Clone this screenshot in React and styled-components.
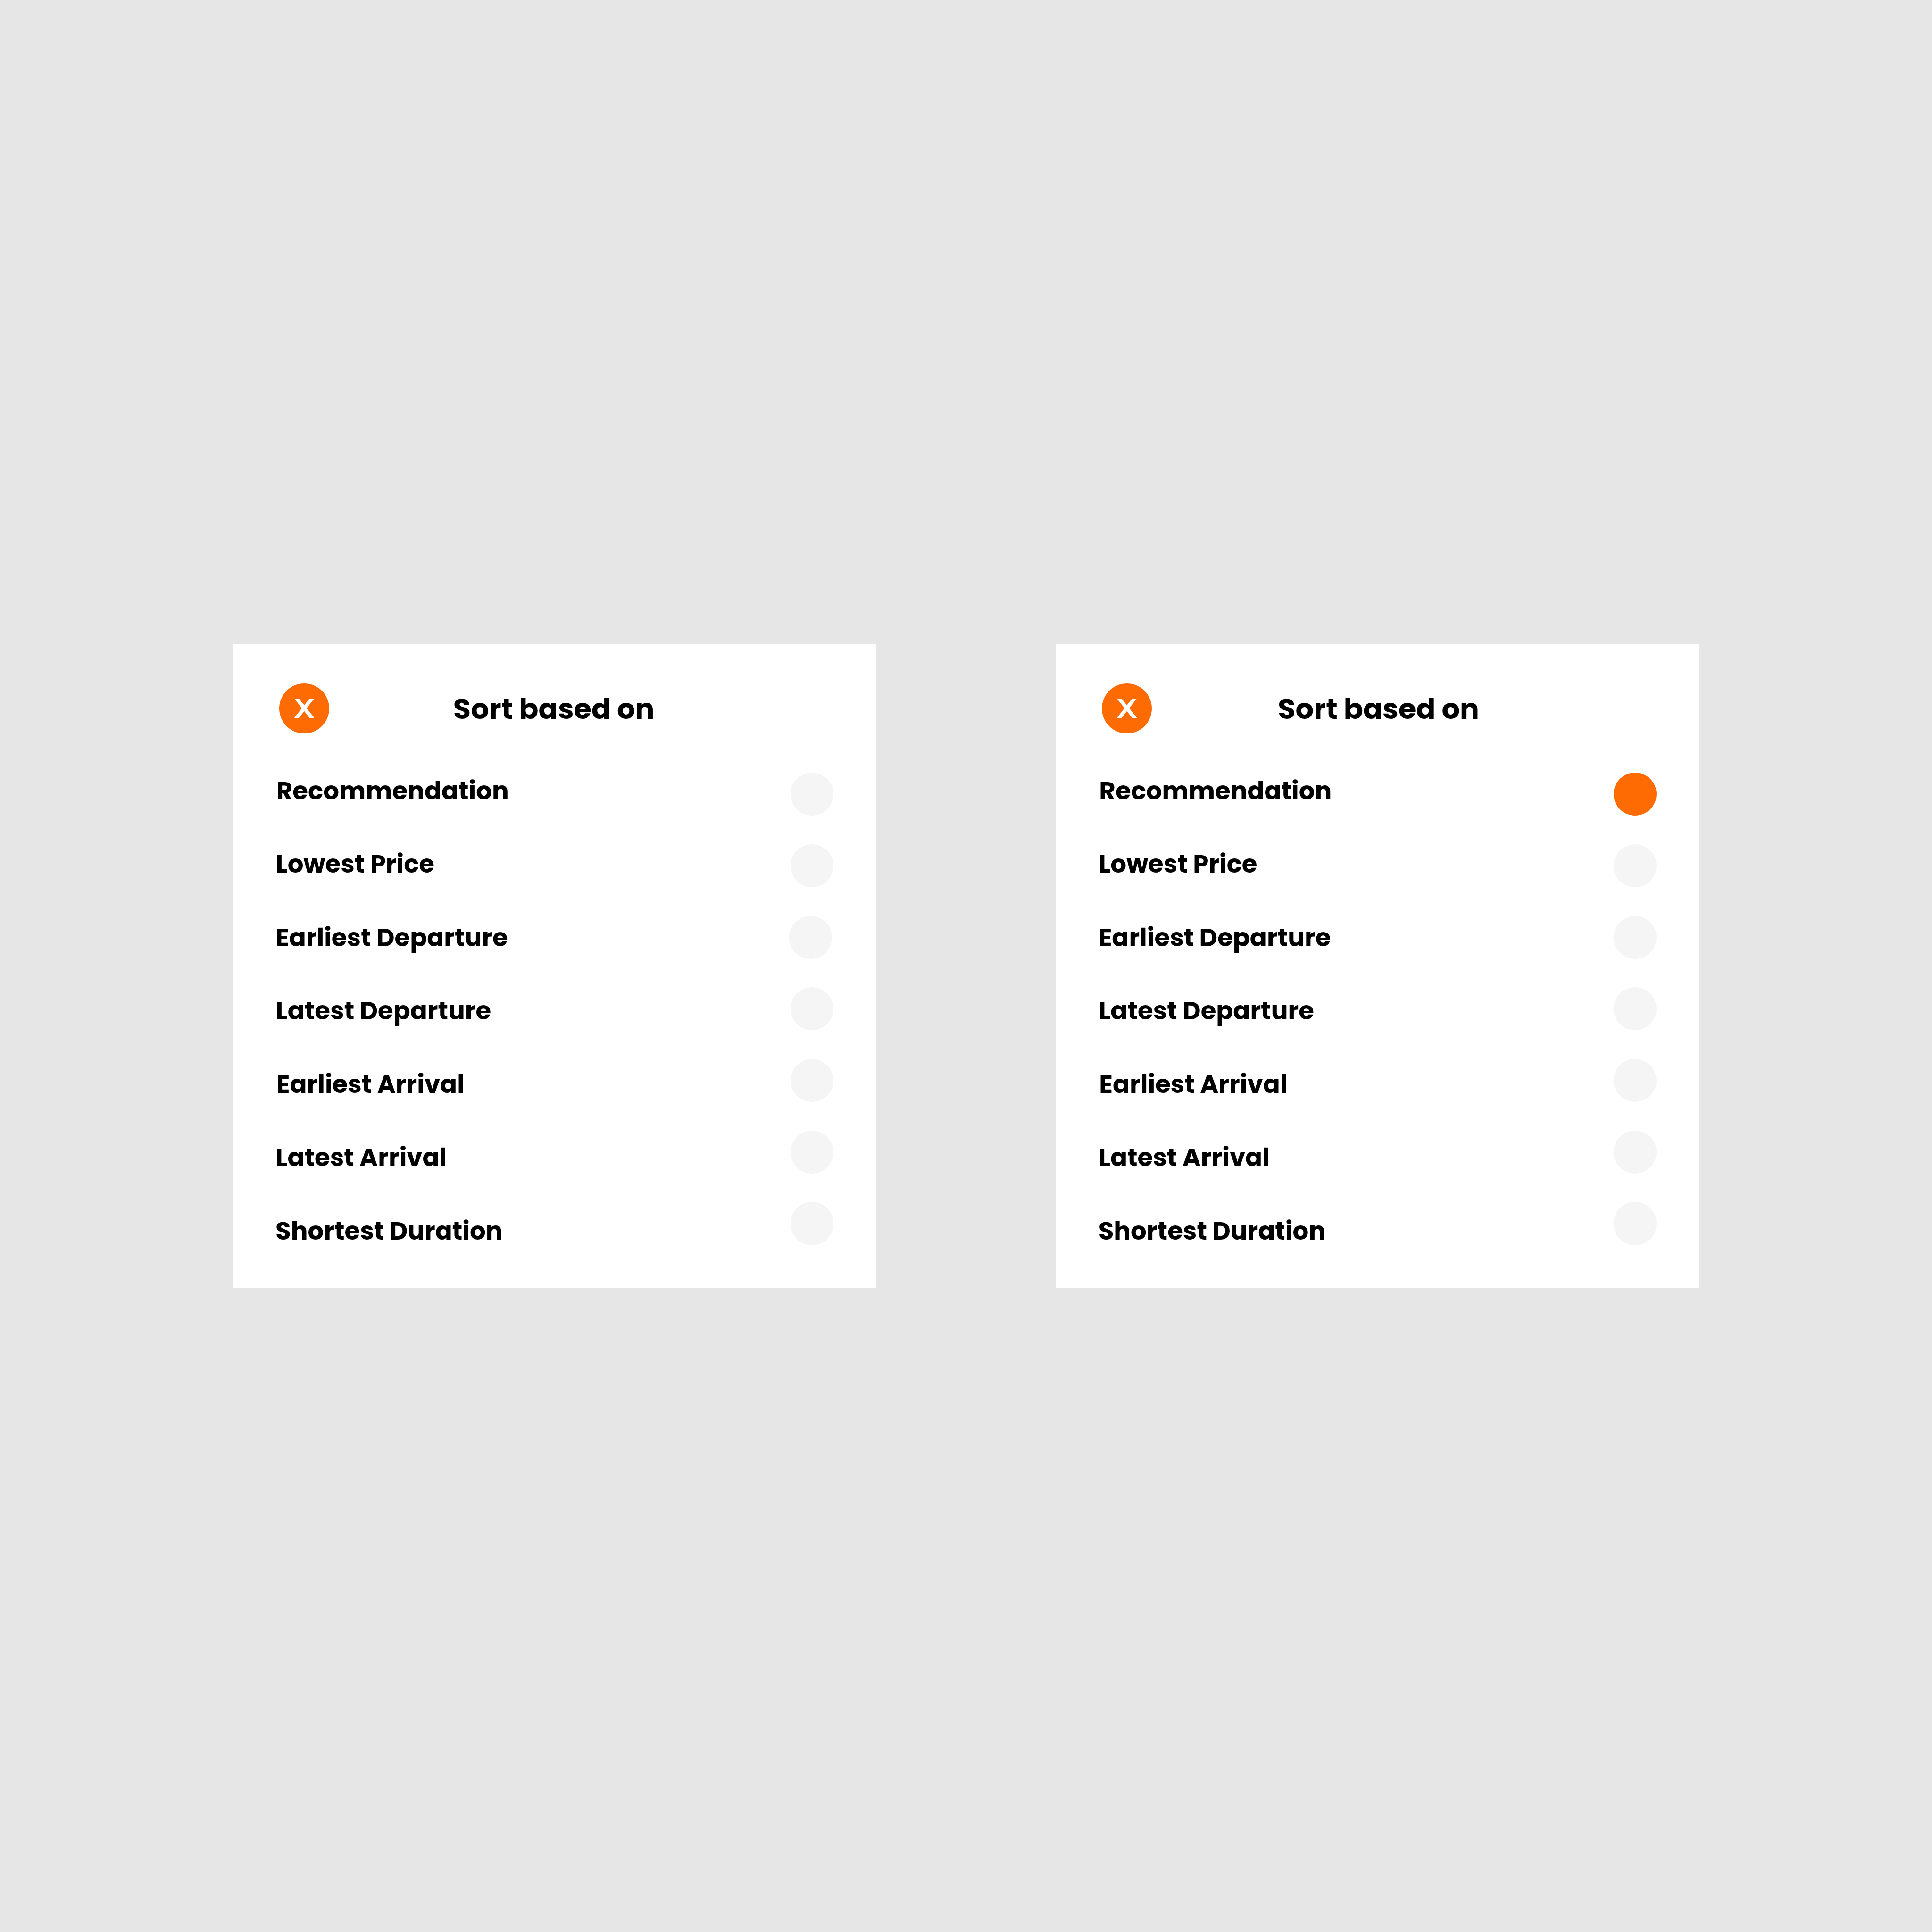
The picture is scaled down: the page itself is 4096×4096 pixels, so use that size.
import React from "react";
import styled, { createGlobalStyle } from "styled-components";

// Design units run on a 4320-unit artboard shown in a 4096px window.
const u = (n) => `${((n * 4096) / 4320).toFixed(3)}px`;

const colors = {
  canvas: "#e6e6e6",
  card: "#ffffff",
  text: "#000000",
  accent: "#ff6b03",
  idle: "#f5f5f5",
};

const GlobalStyle = createGlobalStyle`
  * {
    box-sizing: border-box;
  }
  body {
    margin: 0;
    background: ${colors.canvas};
    color: ${colors.text};
    font-family: Poppins, Inter, sans-serif;
  }
`;

const Canvas = styled.main`
  display: flex;
  align-items: center;
  justify-content: center;
  gap: ${u(400)};
  width: 4096px;
  height: 4096px;
  background: ${colors.canvas};
`;

const Card = styled.section`
  flex: none;
  width: ${u(1440)};
  height: ${u(1440)};
  padding: ${u(88)} ${u(96)} 0;
  background: ${colors.card};
`;

const Header = styled.header`
  display: flex;
  align-items: center;
  height: ${u(112)};
  padding-left: ${u(8)};
`;

const CloseButton = styled.button`
  display: flex;
  align-items: center;
  justify-content: center;
  flex: none;
  width: ${u(112)};
  height: ${u(112)};
  padding: 0;
  border: 0;
  border-radius: 50%;
  background: ${colors.accent};
`;

const CloseIcon = styled.svg`
  display: block;
  width: ${u(44.4)};
  height: ${u(43)};
  overflow: hidden;
`;

const Title = styled.h1`
  margin: 0 0 0 ${(p) => u(p.$gap)};
  padding-top: ${u(2.4)};
  font-size: ${u(64)};
  font-weight: 700;
  line-height: ${u(96)};
  white-space: nowrap;
`;

const Body = styled.div`
  display: flex;
  justify-content: space-between;
  align-items: flex-start;
  margin-top: ${u(86.4)};
`;

const Labels = styled.ul`
  display: flex;
  flex-direction: column;
  gap: ${u(80)};
  margin: 0;
  padding: 0;
  list-style: none;
`;

const Label = styled.li`
  padding-left: ${(p) => u(p.$indent)};
  font-size: ${u(56)};
  font-weight: 700;
  line-height: ${u(84)};
  white-space: nowrap;
`;

const Dots = styled.div`
  display: flex;
  flex-direction: column;
  align-items: flex-end;
  gap: ${u(64)};
  padding-top: ${u(1.6)};
`;

const Dot = styled.span`
  width: ${u(96)};
  height: ${u(96)};
  margin-right: ${(p) => u(p.$inset)};
  border-radius: 50%;
  background: ${(p) => (p.$selected ? colors.accent : colors.idle)};
`;

const options = [
  { label: "Recommendation", indent: 1.8 },
  { label: "Lowest Price", indent: 0.4 },
  { label: "Earliest Departure", indent: 0 },
  { label: "Latest Departure", indent: 0.4 },
  { label: "Earliest Arrival", indent: 1.8 },
  { label: "Latest Arrival", indent: 0 },
  { label: "Shortest Duration", indent: 0 },
];

function SortCard({ selected, titleGap, insets = {} }) {
  return (
    <Card>
      <Header>
        <CloseButton type="button" aria-label="Close">
          <CloseIcon viewBox="0 0 44 42.6" aria-hidden="true">
            <path
              d="M1.16 -5.1 L42.84 47.7 M42.84 -5.1 L1.16 47.7"
              fill="none"
              stroke="#ffffff"
              strokeWidth="8.2"
            />
          </CloseIcon>
        </CloseButton>
        <Title $gap={titleGap}>Sort based on</Title>
      </Header>
      <Body>
        <Labels>
          {options.map((o) => (
            <Label key={o.label} $indent={o.indent}>
              {o.label}
            </Label>
          ))}
        </Labels>
        <Dots>
          {options.map((o, i) => (
            <Dot key={o.label} $selected={i === selected} $inset={insets[i] || 0} />
          ))}
        </Dots>
      </Body>
    </Card>
  );
}

export default function App() {
  return (
    <>
      <GlobalStyle />
      <Canvas>
        <SortCard titleGap={277.4} insets={{ 2: 4 }} />
        <SortCard titleGap={281.5} selected={0} />
      </Canvas>
    </>
  );
}
